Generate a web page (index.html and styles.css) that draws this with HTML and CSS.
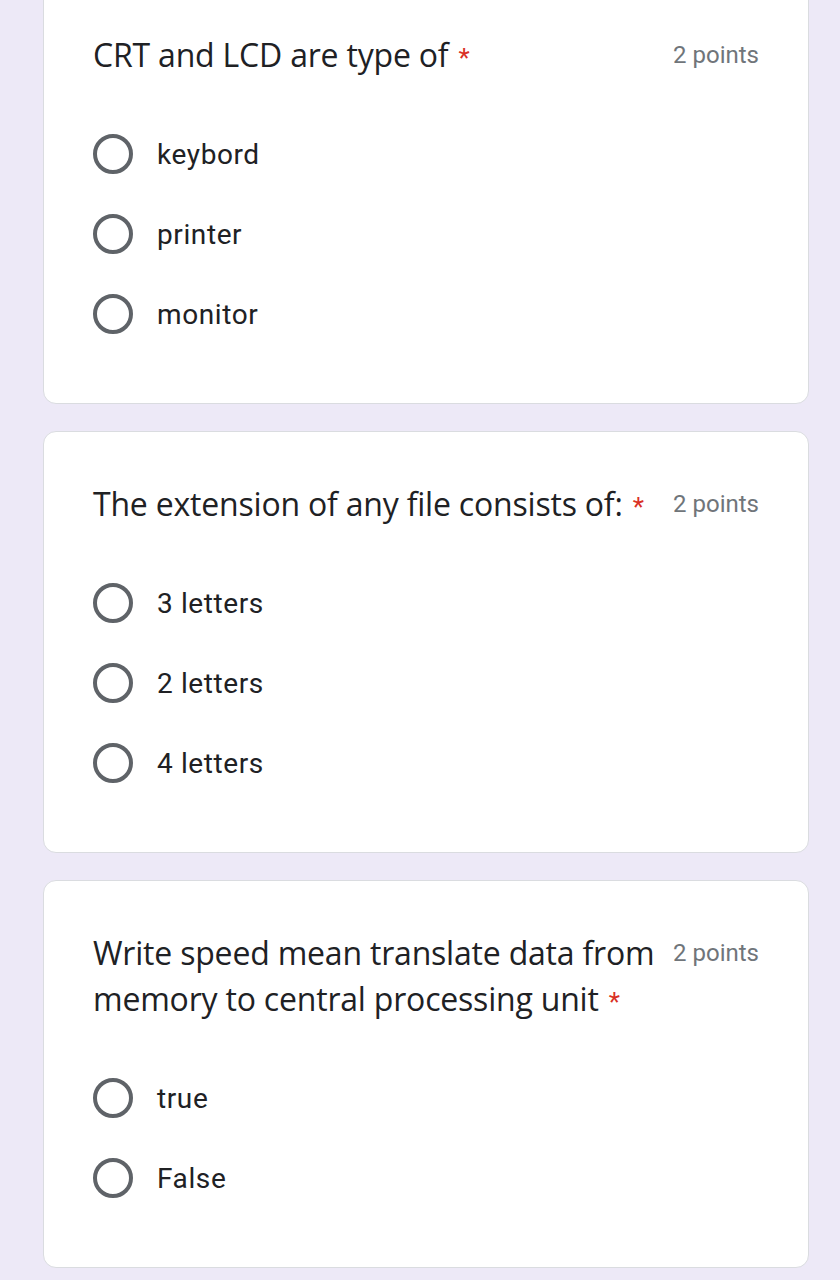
FILE: index.html
```html
<!DOCTYPE html>
<html lang="en">
<head>
<meta charset="utf-8">
<title>Quiz</title>
<link rel="stylesheet" href="styles.css">
</head>
<body>
<main class="form">
  <section class="card">
    <div class="head">
      <h2 class="title">CRT and LCD are type of<span class="req">*</span></h2>
      <span class="points">2 points</span>
    </div>
    <ul class="options">
      <li class="option"><span class="radio"></span><span class="label">keybord</span></li>
      <li class="option"><span class="radio"></span><span class="label">printer</span></li>
      <li class="option"><span class="radio"></span><span class="label">monitor</span></li>
    </ul>
  </section>
  <section class="card">
    <div class="head">
      <h2 class="title">The extension of any file consists of:<span class="req">*</span></h2>
      <span class="points">2 points</span>
    </div>
    <ul class="options">
      <li class="option"><span class="radio"></span><span class="label">3 letters</span></li>
      <li class="option"><span class="radio"></span><span class="label">2 letters</span></li>
      <li class="option"><span class="radio"></span><span class="label">4 letters</span></li>
    </ul>
  </section>
  <section class="card">
    <div class="head">
      <h2 class="title">Write speed mean translate data from memory to central processing unit<span class="req">*</span></h2>
      <span class="points">2 points</span>
    </div>
    <ul class="options">
      <li class="option"><span class="radio"></span><span class="label">true</span></li>
      <li class="option"><span class="radio"></span><span class="label">False</span></li>
    </ul>
  </section>
</main>
</body>
</html>
```

FILE: styles.css
```css
html, body {
  margin: 0;
  padding: 0;
  background: #ede9f7;
}

body {
  height: 1280px;
  overflow: hidden;
}

.form {
  display: flex;
  flex-direction: column;
  gap: 27px;
  width: 766px;
  margin: -18px 0 0 43px;
}

.card {
  background: #ffffff;
  border: 1px solid #dadce0;
  border-radius: 13px;
  padding: 49px 49px 49px 49px;
}

.head {
  display: flex;
  align-items: flex-start;
  gap: 18px;
}

.title {
  flex: 1;
  margin: 0;
  font-family: "Open Sans", "Liberation Sans", sans-serif;
  font-weight: 400;
  font-size: 32px;
  line-height: 46px;
  color: #202124;
  letter-spacing: -0.2px;
}

.req {
  display: inline-block;
  margin-left: 10px;
  font-family: Roboto, "Liberation Sans", sans-serif;
  font-size: 26px;
  line-height: 1;
  color: #d93025;
}

.points {
  flex: none;
  font-family: Roboto, "Liberation Sans", sans-serif;
  font-size: 24px;
  line-height: 46px;
  color: #70757a;
}

.options {
  list-style: none;
  margin: 36px 0 0 0;
  padding: 0;
}

.option {
  display: flex;
  align-items: center;
  gap: 24px;
  height: 80px;
}

.radio {
  box-sizing: border-box;
  width: 40px;
  height: 40px;
  border: 4px solid #5f6368;
  border-radius: 50%;
  flex: none;
}

.label {
  font-family: Roboto, "Liberation Sans", sans-serif;
  font-size: 28px;
  color: #202124;
  letter-spacing: 0.6px;
}
```
